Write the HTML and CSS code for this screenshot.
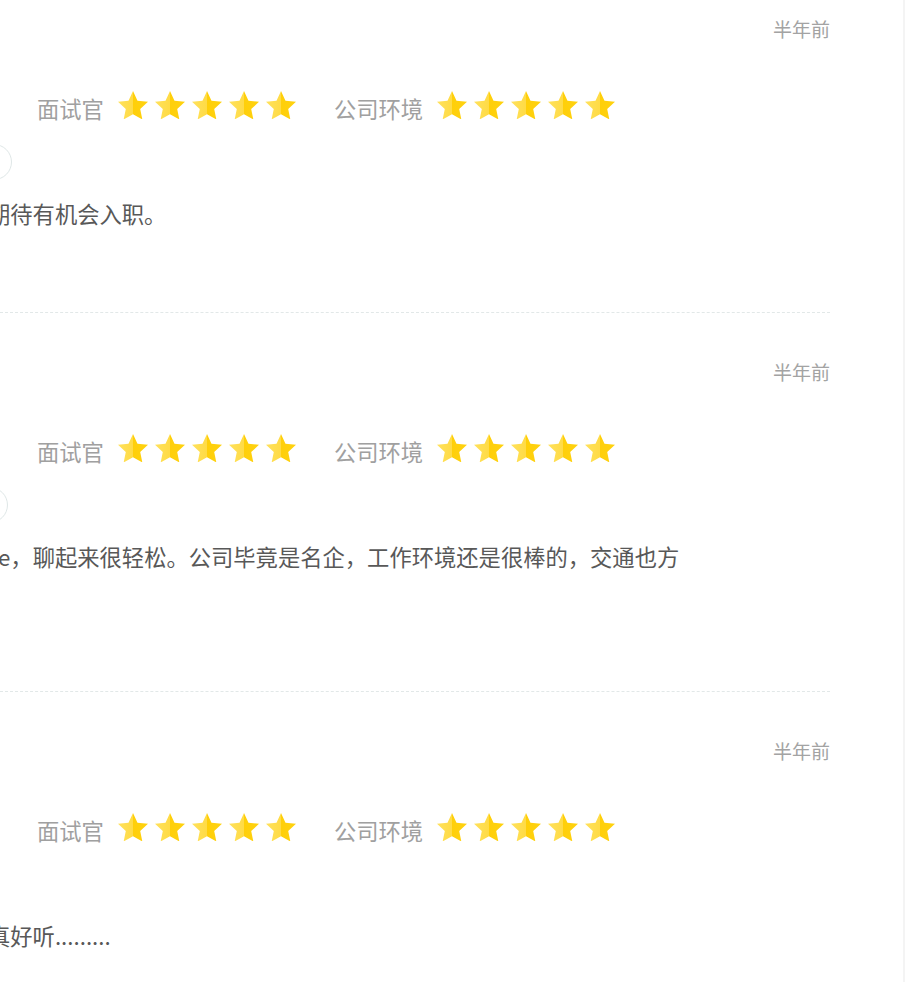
FILE: index.html
```html
<!DOCTYPE html>
<html lang="zh-CN">
<head>
<meta charset="utf-8">
<title>面试评价</title>
<link rel="stylesheet" href="styles.css">
</head>
<body>
<svg class="defs" width="0" height="0" aria-hidden="true">
  <defs>
    <linearGradient id="half" x1="0" y1="0" x2="1" y2="0">
      <stop offset="0" stop-color="#ffe15c"/>
      <stop offset="0.5" stop-color="#ffdb45"/>
      <stop offset="0.5" stop-color="#ffcf0a"/>
      <stop offset="1" stop-color="#ffd20f"/>
    </linearGradient>
    <symbol id="star" viewBox="1.8 1.6 20.4 19.3">
      <path d="M12 1.6l3.05 6.55 7.15.8-5.3 4.9 1.45 7.05L12 17.35 5.65 20.9l1.45-7.05-5.3-4.9 7.15-.8z" fill="url(#half)"/>
    </symbol>
  </defs>
</svg>
<div class="card">
  <section class="review">
    <div class="time-row"><span class="time">半年前</span></div>
    <div class="scores">
      <span class="label">面试官</span>
      <span class="stars"><svg class="star"><use href="#star"/></svg><svg class="star"><use href="#star"/></svg><svg class="star"><use href="#star"/></svg><svg class="star"><use href="#star"/></svg><svg class="star"><use href="#star"/></svg></span>
      <span class="label label-gap">公司环境</span>
      <span class="stars"><svg class="star"><use href="#star"/></svg><svg class="star"><use href="#star"/></svg><svg class="star"><use href="#star"/></svg><svg class="star"><use href="#star"/></svg><svg class="star"><use href="#star"/></svg></span>
    </div>
    <div class="tag-row"><span class="tag tag-a"></span></div>
    <p class="text text-a">期待有机会入职。</p>
  </section>
  <section class="review">
    <div class="time-row"><span class="time">半年前</span></div>
    <div class="scores">
      <span class="label">面试官</span>
      <span class="stars"><svg class="star"><use href="#star"/></svg><svg class="star"><use href="#star"/></svg><svg class="star"><use href="#star"/></svg><svg class="star"><use href="#star"/></svg><svg class="star"><use href="#star"/></svg></span>
      <span class="label label-gap">公司环境</span>
      <span class="stars"><svg class="star"><use href="#star"/></svg><svg class="star"><use href="#star"/></svg><svg class="star"><use href="#star"/></svg><svg class="star"><use href="#star"/></svg><svg class="star"><use href="#star"/></svg></span>
    </div>
    <div class="tag-row"><span class="tag tag-b"></span></div>
    <p class="text text-b">e，聊起来很轻松。公司毕竟是名企，工作环境还是很棒的，交通也方</p>
  </section>
  <section class="review last">
    <div class="time-row"><span class="time">半年前</span></div>
    <div class="scores">
      <span class="label">面试官</span>
      <span class="stars"><svg class="star"><use href="#star"/></svg><svg class="star"><use href="#star"/></svg><svg class="star"><use href="#star"/></svg><svg class="star"><use href="#star"/></svg><svg class="star"><use href="#star"/></svg></span>
      <span class="label label-gap">公司环境</span>
      <span class="stars"><svg class="star"><use href="#star"/></svg><svg class="star"><use href="#star"/></svg><svg class="star"><use href="#star"/></svg><svg class="star"><use href="#star"/></svg><svg class="star"><use href="#star"/></svg></span>
    </div>
    <div class="tag-row"></div>
    <p class="text text-a">真好听.........</p>
  </section>
</div>
</body>
</html>
```

FILE: styles.css
```css
html, body {
  margin: 0;
  padding: 0;
}
body {
  background: #f4f4f4;
  font-family: "Noto Sans CJK SC", "Noto Sans", sans-serif;
  overflow: hidden;
  height: 982px;
}
.defs {
  position: absolute;
  width: 0;
  height: 0;
}
.card {
  width: 903px;
  height: 1012px;
  background: #ffffff;
  margin-top: -30px;
  overflow: hidden;
}
.review {
  margin-right: 73px;
  padding-top: 44px;
  padding-bottom: 81px;
  border-bottom: 1px dashed #e2e8e8;
}
.review.last {
  border-bottom: none;
  padding-bottom: 0;
}
.time-row {
  display: flex;
  justify-content: flex-end;
  height: 30px;
  align-items: center;
}
.time {
  font-size: 19px;
  line-height: 30px;
  color: #a3a3a3;
}
.scores {
  display: flex;
  align-items: center;
  height: 40px;
  margin-top: 44px;
  padding-left: 37px;
}
.label {
  font-size: 22.3px;
  line-height: 40px;
  color: #a0a0a0;
}
.label-gap {
  margin-left: 38px;
}
.stars {
  display: flex;
  gap: 7px;
  margin-left: 14px;
  margin-top: -6px;
}
.star {
  width: 30px;
  height: 28.5px;
  display: block;
}
.tag-row {
  height: 36px;
  margin-top: 16px;
  display: flex;
}
.tag {
  display: block;
  width: 34px;
  height: 34px;
  border: 1px solid #dfe7e7;
  border-radius: 50%;
  flex: none;
}
.tag-a {
  margin-left: -24px;
}
.tag-b {
  margin-left: -28px;
}
.text {
  margin: 15px 0 0;
  font-size: 22.3px;
  line-height: 36px;
  color: #585858;
}
.text-a {
  margin-left: -12px;
}
.text-b {
  margin-left: -2px;
  min-height: 72px;
}
```
